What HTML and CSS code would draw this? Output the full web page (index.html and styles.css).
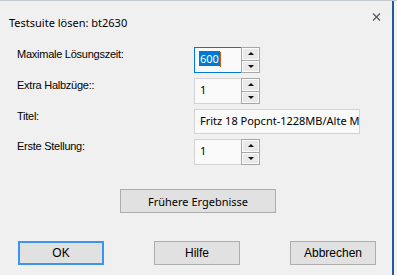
FILE: index.html
```html
<!DOCTYPE html>
<html lang="de">
<head>
  <meta charset="UTF-8" />
  <title>Testsuite lösen</title>
  <link rel="stylesheet" href="styles.css">
</head>
<body>
  <div class="window">
    <div class="dialog">
      <div class="titlebar">
        <span class="title">Testsuite lösen: bt2630</span>
        <svg class="close" width="9" height="8" viewBox="0 0 9 8">
          <path d="M1 0.5 L8 7.5 M8 0.5 L1 7.5" stroke="#5a5a5a" stroke-width="1.3" fill="none"/>
        </svg>
      </div>

      <div class="form">
        <div class="label">Maximale Lösungszeit:</div>
        <div class="spin">
          <div class="field focused"><span class="sel">600</span><span class="caret"></span></div>
          <div class="arrows">
            <span class="arrow up"></span>
            <span class="arrow down"></span>
          </div>
        </div>

        <div class="label">Extra Halbzüge::</div>
        <div class="spin">
          <div class="field">1</div>
          <div class="arrows">
            <span class="arrow up"></span>
            <span class="arrow down"></span>
          </div>
        </div>

        <div class="label">Titel:</div>
        <div class="field text">Fritz 18 Popcnt-1228MB/Alte Meister</div>

        <div class="label">Erste Stellung:</div>
        <div class="spin">
          <div class="field">1</div>
          <div class="arrows">
            <span class="arrow up"></span>
            <span class="arrow down"></span>
          </div>
        </div>
      </div>

      <div class="more">
        <button class="btn wide">Frühere Ergebnisse</button>
      </div>

      <div class="actions">
        <button class="btn default">OK</button>
        <button class="btn">Hilfe</button>
        <button class="btn">Abbrechen</button>
      </div>
    </div>
    <div class="edge"></div>
    <div class="behind"></div>
  </div>
</body>
</html>
```

FILE: styles.css
```css
body {
  margin: 0;
  width: 397px;
  height: 275px;
  overflow: hidden;
  background: #f0f0f0;
  color: #000;
}

.window {
  display: flex;
  height: 275px;
  box-sizing: border-box;
  border-top: 1px solid #c3cad3;
}

.dialog {
  width: 392px;
  background: #f0f0f0;
}

.edge {
  width: 2px;
  background: #1d5c9e;
}

.behind {
  flex: 1;
  background: #f4f4f4;
}

/* title bar */
.titlebar {
  display: flex;
  align-items: flex-start;
  height: 46px;
  box-sizing: border-box;
  padding: 11px 11px 0 9px;
}

.title {
  font-family: "Noto Sans", sans-serif;
  font-size: 11px;
  line-height: 16px;
  margin-top: 3px;
}

.close {
  margin-left: auto;
  margin-top: 1px;
}

/* form rows */
.form {
  display: grid;
  grid-template-columns: 177px auto;
  row-gap: 5px;
  padding-left: 17px;
  justify-items: start;
}

.label {
  font-family: "Liberation Sans", Arial, sans-serif;
  font-size: 11px;
  line-height: 13px;
  letter-spacing: -0.25px;
  padding-top: 1px;
}

.spin {
  display: flex;
  height: 26px;
}

.field {
  box-sizing: border-box;
  width: 47px;
  height: 26px;
  background: #fafafa;
  border: 1px solid #d2d2d2;
  border-right: none;
  padding: 3px 0 0 5px;
  font-family: "Noto Sans", sans-serif;
  font-size: 11px;
  line-height: 16px;
  white-space: nowrap;
  overflow: hidden;
}

.field.focused {
  border-color: #0078d7;
  padding-left: 4px;
}

.sel {
  background: #0078d7;
  color: #fff;
  padding: 0 1px;
}

.caret {
  display: inline-block;
  width: 1px;
  height: 15px;
  background: #c2601c;
  vertical-align: -4px;
}

.field.text {
  width: 166px;
  height: 25px;
  border-right: 1px solid #d2d2d2;
  padding-top: 3px;
}

.arrows {
  box-sizing: border-box;
  width: 19px;
  height: 26px;
  border: 1px solid #a6a6a6;
  display: flex;
  flex-direction: column;
  background: #a6a6a6;
  gap: 1px;
}

.arrow {
  flex: 1;
  background: #e9e9e9;
  border: 1px solid #fbfbfb;
  display: flex;
  align-items: center;
  justify-content: center;
}

.arrow::before {
  content: "";
  border-left: 3px solid transparent;
  border-right: 3px solid transparent;
}

.up::before {
  border-bottom: 3px solid #111;
}

.down::before {
  border-top: 3px solid #111;
}

/* buttons */
.btn {
  box-sizing: border-box;
  width: 86px;
  height: 24px;
  margin: 0;
  padding: 0;
  background: #e1e1e1;
  border: 1px solid #adadad;
  font-family: "Liberation Sans", Arial, sans-serif;
  font-size: 12px;
  color: #000;
}

.btn.default {
  border: 2px solid #3d93f2;
}

.btn.wide {
  width: 156px;
  font-family: "Noto Sans", sans-serif;
  font-size: 11px;
}

.more {
  padding: 24px 0 0 120px;
}

.actions {
  display: flex;
  justify-content: space-between;
  padding: 28px 16px 0 18px;
}
```
